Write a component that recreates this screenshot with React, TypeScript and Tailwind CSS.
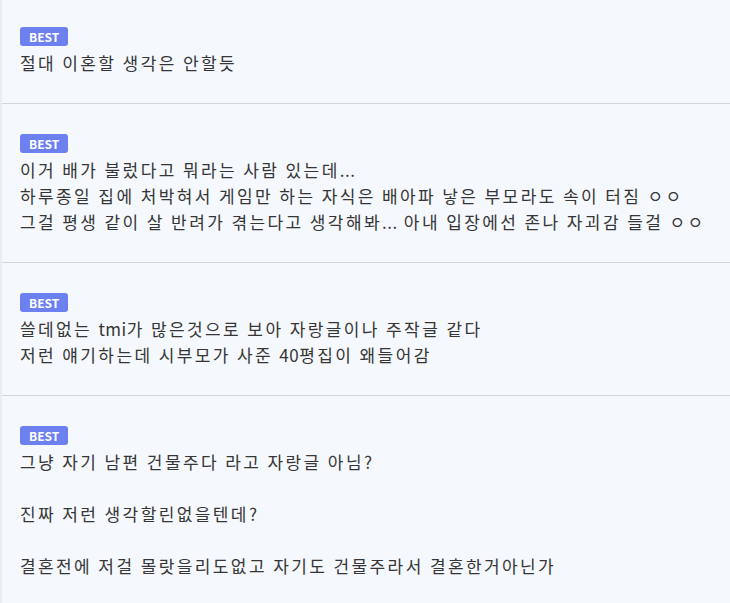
const comments: string[][] = [
  ["절대 이혼할 생각은 안할듯"],
  [
    "이거 배가 불렀다고 뭐라는 사람 있는데...",
    "하루종일 집에 처박혀서 게임만 하는 자식은 배아파 낳은 부모라도 속이 터짐 ㅇㅇ",
    "그걸 평생 같이 살 반려가 겪는다고 생각해봐... 아내 입장에선 존나 자괴감 들걸 ㅇㅇ",
  ],
  ["쓸데없는 tmi가 많은것으로 보아 자랑글이나 주작글 같다", "저런 얘기하는데 시부모가 사준 40평집이 왜들어감"],
  ["그냥 자기 남편 건물주다 라고 자랑글 아님?", "", "진짜 저런 생각할린없을텐데?", "", "결혼전에 저걸 몰랏을리도없고 자기도 건물주라서 결혼한거아닌가"],
]

// latin runs keep normal spacing, hangul gets the wide tracking
function Line({ text }: { text: string }) {
  const parts = text.split(/([A-Za-z0-9.]+)/)
  return (
    <div className="h-[26px] whitespace-pre">
      {parts.map((p, k) =>
        /^[A-Za-z0-9.]+$/.test(p) ? (
          <span key={k} className="tracking-[0.5px]">{p}</span>
        ) : (
          <span key={k}>{p}</span>
        )
      )}
    </div>
  )
}

export default function App() {
  return (
    <div
      className="w-[730px] h-[603px] overflow-hidden bg-[#f5f8fc] border-l-2 border-[#e9edf2]"
      style={{ fontFamily: '"Noto Sans CJK KR", "Noto Sans", sans-serif' }}
    >
      <div className="-mt-[3px]">
        {comments.map((lines, i) => (
          <div key={i} className="border-b border-[#d3d6db] pl-[18px] pt-[30px] pb-[27px]">
            <div className="flex h-[19px] w-fit items-center rounded-[3px] bg-[#6c80ef] px-[9px] text-[12px] font-bold leading-none text-white">
              BEST
            </div>
            <div className="pt-[4px] text-[17px] leading-[26px] tracking-[2.4px] text-[#363636]">
              {lines.map((l, j) => (
                <Line key={j} text={l} />
              ))}
            </div>
          </div>
        ))}
      </div>
    </div>
  )
}
